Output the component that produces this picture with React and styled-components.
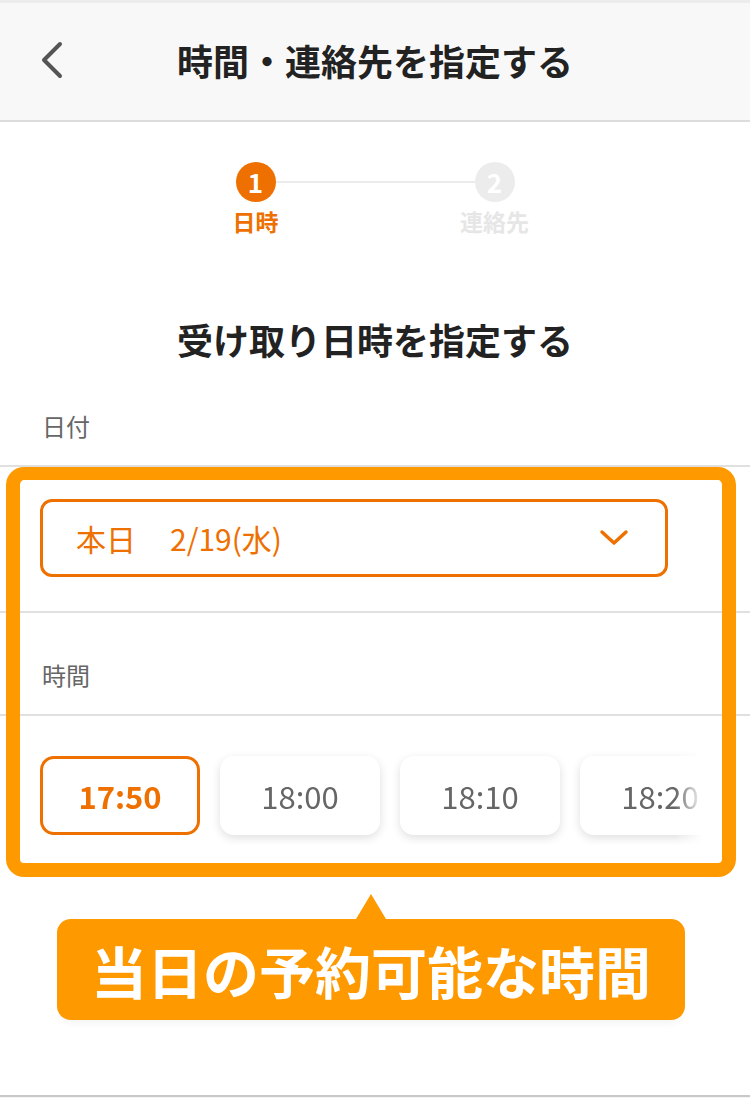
import React from "react";
import styled, { createGlobalStyle } from "styled-components";

const GlobalStyle = createGlobalStyle`
  html, body { margin: 0; padding: 0; background: #fff; }
  body {
    font-family: "Noto Sans CJK JP", "Noto Sans", sans-serif;
    -webkit-font-smoothing: antialiased;
  }
  * { box-sizing: border-box; }
`;

const ORANGE = "#EE7000";
const HILITE = "#FF9900";

const Page = styled.div`
  width: 750px;
  height: 1098px;
  display: flex;
  flex-direction: column;
  background: #fff;
  overflow: hidden;
`;

const Header = styled.header`
  height: 122px;
  flex-shrink: 0;
  display: grid;
  grid-template-columns: 120px 1fr 120px;
  align-items: center;
  padding-bottom: 4px;
  background: #f8f8f8;
  border-top: 3px solid #ececec;
  border-bottom: 2px solid #dcdcdc;
`;

const BackButton = styled.button`
  justify-self: start;
  margin-left: 34px;
  padding: 4px;
  border: 0;
  background: none;
  display: flex;
  cursor: pointer;
`;

const Title = styled.h1`
  margin: 0;
  text-align: center;
  font-size: 36px;
  line-height: 50px;
  font-weight: 700;
  color: #222;
`;

const Stepper = styled.div`
  margin: 40px auto 0;
  display: grid;
  grid-template-columns: 80px 159px 80px;
  width: 319px;
`;

const Step = styled.div`
  display: flex;
  flex-direction: column;
  align-items: center;
  gap: 4px;
  position: relative;
  z-index: 1;
`;

const StepDot = styled.div`
  width: 40px;
  height: 40px;
  border-radius: 50%;
  background: ${(p) => (p.$active ? ORANGE : "#ececec")};
  color: #fff;
  display: flex;
  align-items: center;
  justify-content: center;
  font-size: 26px;
  font-weight: 700;
  line-height: 1;
`;

const StepLabel = styled.div`
  font-size: 23px;
  line-height: 30px;
  font-weight: 700;
  white-space: nowrap;
  color: ${(p) => (p.$active ? ORANGE : "#e6e6e6")};
`;

const Connector = styled.div`
  height: 2px;
  margin: 19px -20px 0;
  background: #ebebeb;
`;

const Heading = styled.h2`
  margin: 78px 0 0;
  text-align: center;
  font-size: 36px;
  line-height: 50px;
  font-weight: 700;
  color: #222;
`;

const FieldLabel = styled.div`
  padding: 45px 42px 22px;
  font-size: 24px;
  line-height: 34px;
  color: #666;
  border-bottom: 2px solid #e0e0e0;
`;

const Highlighted = styled.div`
  position: relative;
`;

const Frame = styled.div`
  position: absolute;
  top: 0;
  left: 6px;
  right: 14px;
  bottom: 0;
  border: 14px solid ${HILITE};
  border-top-width: 13px;
  border-radius: 18px;
  pointer-events: none;
`;

const SelectSection = styled.div`
  padding: 32px 82px 34px 40px;
  border-bottom: 2px solid #e0e0e0;
`;

const Select = styled.div`
  height: 78px;
  border: 3px solid ${ORANGE};
  border-radius: 12px;
  display: flex;
  align-items: center;
  justify-content: space-between;
  padding: 0 36px 0 33px;
  color: ${ORANGE};
  font-size: 30px;
  line-height: 40px;
`;

const SelectValue = styled.span`
  display: flex;
  gap: 34px;
`;

const ChipsSection = styled.div`
  padding: 40px 47px 42px 40px;
`;

const ChipScroller = styled.div`
  display: flex;
  gap: 20px;
  overflow: hidden;
  padding: 10px 0;
  margin: -10px 0;
  -webkit-mask-image: linear-gradient(to right, #000 calc(100% - 28px), transparent);
  mask-image: linear-gradient(to right, #000 calc(100% - 28px), transparent);
`;

const Chip = styled.div`
  flex: 0 0 160px;
  height: 79px;
  border-radius: 14px;
  display: flex;
  align-items: center;
  justify-content: center;
  font-size: 31px;
  line-height: 1;
  background: #fff;
  color: ${(p) => (p.$selected ? ORANGE : "#666")};
  font-weight: ${(p) => (p.$selected ? 700 : 400)};
  border: ${(p) => (p.$selected ? `3px solid ${ORANGE}` : "0")};
  box-shadow: ${(p) => (p.$selected ? "none" : "0 3px 10px rgba(0,0,0,0.13)")};
`;

const Callout = styled.div`
  margin: 17px 0 0 57px;
  width: 628px;
  display: flex;
  flex-direction: column;
  align-items: center;
`;

const CalloutArrow = styled.div`
  width: 0;
  height: 0;
  border-left: 15px solid transparent;
  border-right: 15px solid transparent;
  border-bottom: 25px solid ${HILITE};
`;

const CalloutBox = styled.div`
  width: 100%;
  height: 101px;
  background: ${HILITE};
  border-radius: 14px;
  display: flex;
  align-items: center;
  justify-content: center;
  color: #fff;
  font-size: 56px;
  font-weight: 700;
  line-height: 1;
  box-shadow: 0 8px 10px -6px rgba(0,0,0,0.06);
`;

const Spacer = styled.div`
  flex: 1;
`;

const BottomBar = styled.div`
  flex-shrink: 0;
  height: 3px;
  background: #f4f4f4;
  border-top: 2px solid #c8c8c8;
  box-shadow: 0 -10px 16px rgba(0,0,0,0.025);
`;

const times = ["17:50", "18:00", "18:10", "18:20"];

export default function App() {
  return (
    <>
      <GlobalStyle />
      <Page>
        <Header>
          <BackButton aria-label="戻る">
            <svg width="28" height="40" viewBox="0 0 28 40" fill="none">
              <path d="M22 4 L6 20 L22 36" stroke="#555" strokeWidth="4" strokeLinecap="round" strokeLinejoin="round" />
            </svg>
          </BackButton>
          <Title>時間・連絡先を指定する</Title>
          <span />
        </Header>

        <Stepper>
          <Step>
            <StepDot $active>1</StepDot>
            <StepLabel $active>日時</StepLabel>
          </Step>
          <Connector />
          <Step>
            <StepDot>2</StepDot>
            <StepLabel>連絡先</StepLabel>
          </Step>
        </Stepper>

        <Heading>受け取り日時を指定する</Heading>

        <FieldLabel>日付</FieldLabel>

        <Highlighted>
          <SelectSection>
            <Select>
              <SelectValue>
                <span>本日</span>
                <span>2/19(水)</span>
              </SelectValue>
              <svg width="30" height="18" viewBox="0 0 30 18" fill="none">
                <path d="M3 3 L15 14 L27 3" stroke={ORANGE} strokeWidth="3.5" strokeLinecap="round" strokeLinejoin="round" />
              </svg>
            </Select>
          </SelectSection>

          <FieldLabel>時間</FieldLabel>

          <ChipsSection>
            <ChipScroller>
              {times.map((t, i) => (
                <Chip key={t} $selected={i === 0}>
                  {t}
                </Chip>
              ))}
            </ChipScroller>
          </ChipsSection>
          <Frame />
        </Highlighted>

        <Callout>
          <CalloutArrow />
          <CalloutBox>当日の予約可能な時間</CalloutBox>
        </Callout>

        <Spacer />
        <BottomBar />
      </Page>
    </>
  );
}
